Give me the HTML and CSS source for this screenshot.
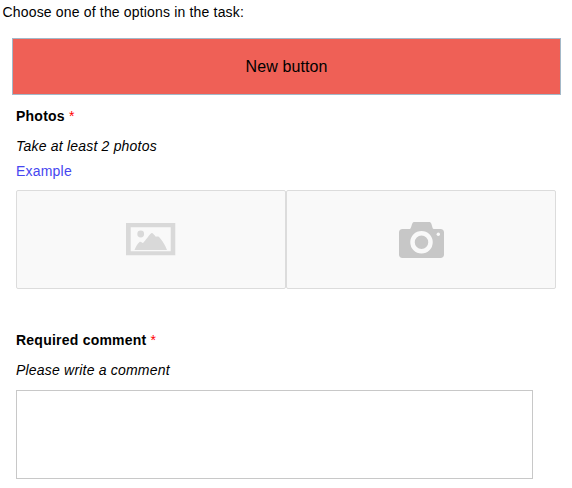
FILE: index.html
```html
<!DOCTYPE html>
<html lang="en">
<head>
<meta charset="utf-8">
<title>Task</title>
<link rel="stylesheet" href="styles.css">
</head>
<body>
<p class="intro">Choose one of the options in the task:</p>
<button class="option" type="button">New button</button>
<section class="field">
  <h2 class="label">Photos <span class="required">*</span></h2>
  <p class="hint">Take at least 2 photos</p>
  <a class="example">Example</a>
  <div class="uploads">
    <div class="upload">
      <svg class="picture" width="50" height="33" viewBox="0 0 50 33">
        <path fill="#d9d9d9" fill-rule="evenodd" d="M0 0h49.3v32.3H0zM4.700 4.200v24h40v-24z"/>
        <circle cx="14.700" cy="11" r="3.400" fill="#d9d9d9"/>
        <path fill="#d9d9d9" d="M8.500 27c1.500-3.500 3-6.500 5-8 1.300-.8 2.200.6 3.500 1 3-3 6-8 8.300-9.800 1.200-.8 2.500 1.300 4.500 3.600 1-.5 2-.6 3 0 3 3 6.500 8.500 8.200 13.200z"/>
      </svg>
    </div>
    <div class="upload">
      <svg class="camera" width="46" height="37" viewBox="0 0 46 37">
        <path fill="#c7c7c7" d="M3.500 7h7.200c1.500 0 2-5.500 3.300-6.500.5-.4 1-.5 1.700-.5h14c.8 0 1.400.1 1.800.5C33 1.700 33.200 7 34.700 7h6.800C43.700 7 45 8.500 45 10.500v22c0 2-1.300 3.500-3.500 3.500h-38C1.300 36 0 34.500 0 32.500v-22C0 8.500 1.300 7 3.500 7z"/>
        <circle cx="22.500" cy="20.300" r="9" fill="none" stroke="#f9f9f9" stroke-width="4.500"/>
        <circle cx="39.300" cy="12.300" r="1.700" fill="#f9f9f9"/>
      </svg>
    </div>
  </div>
</section>
<section class="field comment">
  <h2 class="label">Required comment <span class="required">*</span></h2>
  <p class="hint">Please write a comment</p>
  <textarea class="input"></textarea>
</section>
</body>
</html>
```

FILE: styles.css
```css
* {
  box-sizing: border-box;
}

body {
  margin: 0;
  background: #fff;
  color: #000;
  font: 14px/20px "Liberation Sans", Arial, sans-serif;
  letter-spacing: 0.2px;
}

.intro {
  margin: 2px 0 16px 2.5px;
  letter-spacing: 0.17px;
}

.option {
  display: block;
  width: 549px;
  height: 57px;
  margin: 0 0 0 12px;
  padding: 0;
  border: 1px solid #a3b8c8;
  background: #ef6056;
  color: #000;
  font: inherit;
  font-size: 16px;
  letter-spacing: 0.1px;
}

.field {
  margin: 11px 16px 0;
}

.label {
  margin: 0 0 10px;
  font-size: 14px;
  line-height: 20px;
  letter-spacing: 0.23px;
}

.required {
  color: #f00;
  font-weight: normal;
}

.hint {
  margin: 0;
  font-style: italic;
}

.example {
  display: block;
  margin-top: 5px;
  color: #4646f0;
}

.uploads {
  display: flex;
  margin-top: 9px;
}

.upload {
  display: flex;
  align-items: center;
  justify-content: center;
  width: 270px;
  height: 99px;
  border: 1px solid #dcdcdc;
  border-radius: 2px;
  background: #f9f9f9;
}

.camera {
  margin: 1px 0 0 2px;
}

.comment {
  margin-top: 41px;
}

.input {
  display: block;
  width: 517px;
  height: 89px;
  margin-top: 10px;
  border: 1px solid #c8c8c8;
  background: #fff;
  resize: none;
}
```
